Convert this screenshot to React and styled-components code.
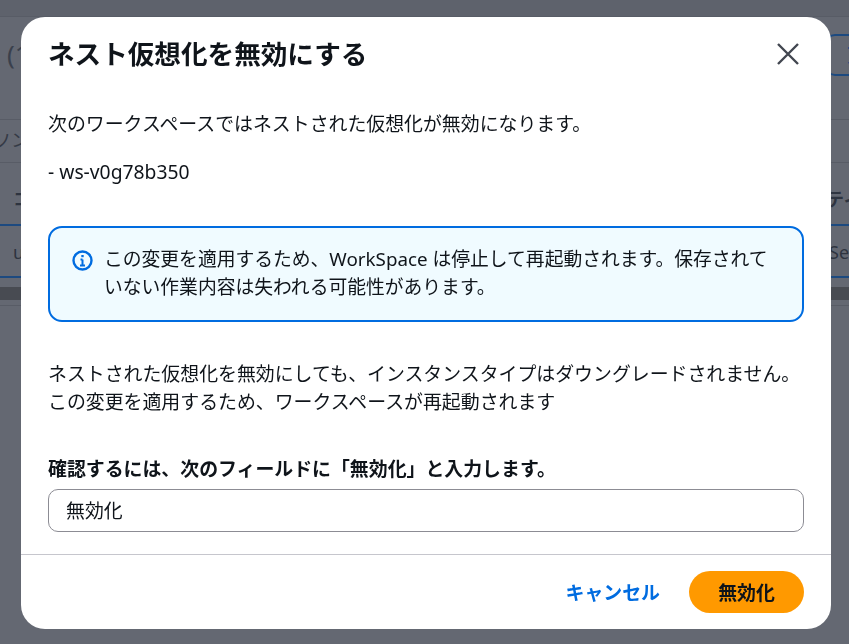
import React from "react";
import styled, { createGlobalStyle } from "styled-components";

const GlobalStyle = createGlobalStyle`
  html, body {
    margin: 0;
    height: 100%;
    overflow: hidden;
    background: #646872;
    font-family: "Noto Sans", "Noto Sans CJK JP", sans-serif;
    color: #16191f;
  }
  * { box-sizing: border-box; }
`;

/* page behind the dimmed overlay */
const Page = styled.div`
  height: 644px;
  display: flex;
  flex-direction: column;
  overflow: hidden;
  background: #646872;
  color: #2e3440;
`;

const TopBar = styled.div`
  height: 17px;
  background: #5e626c;
  border-bottom: 1px solid #585c66;
`;

const TitleRow = styled.div`
  height: 103px;
  padding: 17px 0 0 7px;
  display: flex;
  justify-content: space-between;
  align-items: flex-start;
  font-size: 26px;
  line-height: 41px;
  color: #3a404c;
  border-bottom: 1px solid #585c66;
`;

const GhostButton = styled.div`
  width: 50px;
  height: 42px;
  margin-right: -26px;
  padding: 8px 0 0 20px;
  border: 2px solid #1d4a80;
  border-radius: 10px;
  font-size: 18px;
  line-height: 22px;
  font-weight: 700;
  color: #1d4a80;
`;

const FilterRow = styled.div`
  height: 43px;
  font-size: 18px;
  line-height: 40px;
  text-indent: -7px;
  border-bottom: 1px solid #585c66;
  color: #343a46;
`;

const TableHead = styled.div`
  height: 63px;
  display: flex;
  justify-content: space-between;
  padding: 21px 3px 0 13px;
  font-size: 18px;
  line-height: 30px;
  font-weight: 700;
  border-bottom: 2px solid #1d4a80;
`;

const TableRow = styled.div`
  height: 52px;
  display: flex;
  justify-content: space-between;
  padding: 12px 0 0 13px;
  font-size: 18px;
  line-height: 28px;
  border-bottom: 2px solid #1d4a80;
`;

const EdgeCell = styled.span`
  width: 20px;
  white-space: nowrap;
`;

const ScrollTrack = styled.div`
  height: 13px;
  margin-top: 9px;
  background: #484b52;
`;

const PageRule = styled.div`
  height: 1px;
  margin-top: 5px;
  background: #585c66;
`;

const Overlay = styled.div`
  position: fixed;
  inset: 0;
  padding: 17px 18px 15px 21px;
`;

const Modal = styled.div`
  height: 612px;
  display: flex;
  flex-direction: column;
  background: #fff;
  border-radius: 24px;
  overflow: hidden;
`;

const Header = styled.div`
  height: 94px;
  padding: 17px 32px 0 27px;
  display: flex;
  justify-content: space-between;
  align-items: flex-start;
`;

const Title = styled.h2`
  margin: 0;
  font-size: 26.6px;
  line-height: 41px;
  font-weight: 700;
  color: #0f141a;
`;

const CloseButton = styled.button`
  width: 22px;
  height: 22px;
  margin-top: 9px;
  padding: 0;
  border: 0;
  background: none;
  color: #424650;
  cursor: pointer;
`;

const Body = styled.div`
  flex: 1;
  padding: 0 27px;
  font-size: 18.9px;
  line-height: 27.6px;
  color: #0f141a;
`;

const Paragraph = styled.p`
  margin: 0 0 ${({ $after }) => $after}px;
`;

const WorkspaceId = styled(Paragraph)`
  font-size: 19.3px;
`;

const InfoBox = styled.div`
  height: 96px;
  margin-bottom: 39px;
  padding: 18px 25px 0 22px;
  display: flex;
  gap: 11px;
  background: #f0fbff;
  border: 2px solid #006ce0;
  border-radius: 14px;
`;

const InfoIcon = styled.svg`
  flex: none;
  width: 21px;
  height: 21px;
  margin-top: 4px;
  color: #006ce0;
`;

const InfoText = styled.span`
  font-size: 18.8px;
`;

const FieldLabel = styled.label`
  display: block;
  margin-bottom: 5px;
  font-weight: 700;
`;

const TextInput = styled.input`
  display: block;
  width: 100%;
  height: 43px;
  padding: 0 17px;
  border: 1px solid #8c8c94;
  border-radius: 10px;
  background: #fff;
  font: inherit;
  color: #0f141a;
  outline: none;
`;

const Footer = styled.div`
  height: 75px;
  padding: 16px 27px 0;
  display: flex;
  justify-content: flex-end;
  align-items: flex-start;
  gap: 29px;
  border-top: 1px solid #c6c6cd;
`;

const LinkButton = styled.button`
  height: 42px;
  padding: 0;
  border: 0;
  background: none;
  font: inherit;
  font-size: 18.9px;
  font-weight: 700;
  color: #006ce0;
  cursor: pointer;
`;

const PrimaryButton = styled.button`
  width: 115px;
  height: 42px;
  padding: 0;
  border: 0;
  border-radius: 21px;
  background: #ff9900;
  font: inherit;
  font-size: 18.9px;
  font-weight: 700;
  color: #0f141a;
  cursor: pointer;
`;

const App = () => {
  return (
    <>
      <GlobalStyle />
      <Page>
        <TopBar />
        <TitleRow>
          <span>(1</span>
          <GhostButton>更</GhostButton>
        </TitleRow>
        <FilterRow>ソン</FilterRow>
        <TableHead>
          <span>コ</span>
          <EdgeCell>ティブ</EdgeCell>
        </TableHead>
        <TableRow>
          <span>u</span>
          <EdgeCell>Server</EdgeCell>
        </TableRow>
        <ScrollTrack />
        <PageRule />
      </Page>
      <Overlay>
        <Modal>
          <Header>
            <Title>ネスト仮想化を無効にする</Title>
            <CloseButton aria-label="閉じる">
              <svg viewBox="0 0 22 22" width="22" height="22" fill="none" stroke="currentColor" strokeWidth="2.4">
                <path d="M1 1l20 20M21 1L1 21" />
              </svg>
            </CloseButton>
          </Header>
          <Body>
            <Paragraph $after={19}>次のワークスペースではネストされた仮想化が無効になります。</Paragraph>
            <WorkspaceId $after={41}>- ws-v0g78b350</WorkspaceId>
            <InfoBox>
              <InfoIcon viewBox="0 0 21 21" fill="none" stroke="currentColor" strokeWidth="2.4">
                <circle cx="10.5" cy="10.5" r="9" />
                <path d="M10.5 9.5v6M8 15.5h5M8.5 9.5h2" strokeWidth="2" />
                <path d="M10.5 5v2.2" strokeWidth="2.4" />
              </InfoIcon>
              <InfoText>この変更を適用するため、WorkSpace は停止して再起動されます。保存されていない作業内容は失われる可能性があります。</InfoText>
            </InfoBox>
            <Paragraph $after={40}>
              ネストされた仮想化を無効にしても、インスタンスタイプはダウングレードされません。
              <br />
              この変更を適用するため、ワークスペースが再起動されます
            </Paragraph>
            <FieldLabel htmlFor="confirm">確認するには、次のフィールドに「無効化」と入力します。</FieldLabel>
            <TextInput id="confirm" defaultValue="無効化" />
          </Body>
          <Footer>
            <LinkButton>キャンセル</LinkButton>
            <PrimaryButton>無効化</PrimaryButton>
          </Footer>
        </Modal>
      </Overlay>
    </>
  );
};

export default App;
